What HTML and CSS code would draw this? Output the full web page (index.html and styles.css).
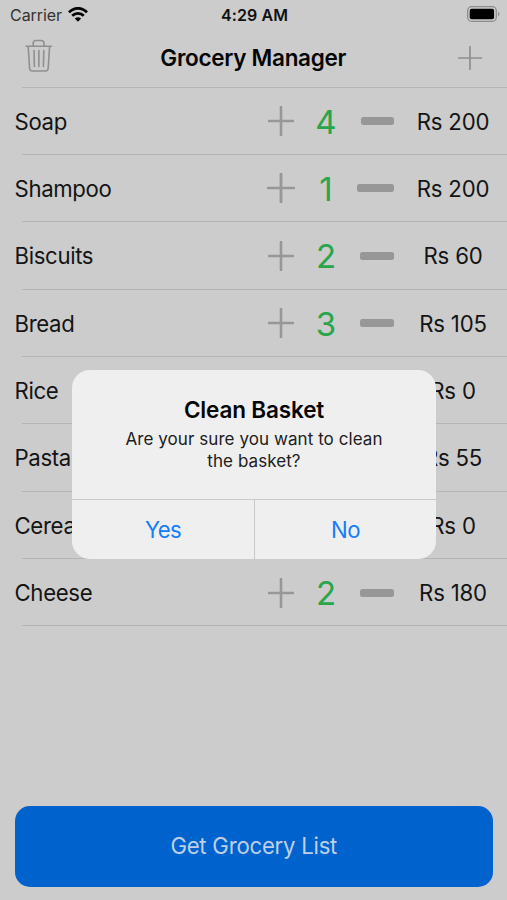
FILE: index.html
```html
<!DOCTYPE html>
<html lang="en">
<head>
<meta charset="utf-8">
<title>Grocery Manager</title>
<link rel="stylesheet" href="styles.css">
</head>
<body>
<svg class="defs" width="0" height="0"><symbol id="plus" viewBox="0 0 26 30" preserveAspectRatio="none"><path d="M13 1v28M1 15h24" stroke="#979797" stroke-width="2.6" stroke-linecap="round"/></symbol></svg>
<div class="screen">
  <div class="status">
    <div class="carrier"><span>Carrier</span>
      <svg width="20" height="15" viewBox="0 0 20 15" fill="none" stroke="#050505" stroke-width="2.7"><path d="M1 5.4C6-.1 14-.1 19 5.4M4.2 8.8C7.5 5.5 12.5 5.5 15.8 8.8"/><path d="M6.8 11.4Q10 8.9 13.2 11.4L10 14.7Z" fill="#050505" stroke="none"/></svg>
    </div>
    <span class="time">4:29 AM</span>
    <svg class="battery" width="33" height="16" viewBox="0 0 33 16"><rect x=".7" y=".7" width="28.6" height="14.6" rx="4" fill="none" stroke="#8b8b8b" stroke-width="1.3"/><rect x="2.7" y="2.8" width="24.4" height="10.4" rx="2" fill="#000"/><path d="M31 5.7q1.5 1 1.5 2.4T31 10.5z" fill="#8b8b8b"/></svg>
  </div>
  <header class="nav">
    <svg class="trash" width="28" height="34" viewBox="0 0 28 34" fill="none" stroke="#8f8f8f" stroke-width="1.6" stroke-linecap="round" stroke-linejoin="round"><path d="M1 7.2h25.6M3.2 7.5l1.4 21.8q.2 2.7 2.8 2.7h13q2.6 0 2.8-2.7L24.6 7.5M8.2 7V4.2q0-2.7 2.7-2.7h5.4q2.7 0 2.7 2.7V7M9 11.5l.4 16M13.9 11.5v16M18.8 11.5l-.4 16"/></svg>
    <h1>Grocery Manager</h1>
    <svg class="add" width="24" height="24" viewBox="0 0 24 24"><path d="M12 .6v22.8M.6 12h22.8" stroke="#8f8f8f" stroke-width="1.7" stroke-linecap="round"/></svg>
  </header>
  <main class="list">
    <div class="row"><span class="name">Soap</span><svg class="plus"><use href="#plus"/></svg><span class="qty">4</span><i class="minus short"></i><span class="price">Rs 200</span></div>
    <div class="row"><span class="name">Shampoo</span><svg class="plus wide"><use href="#plus"/></svg><span class="qty">1</span><i class="minus long"></i><span class="price">Rs 200</span></div>
    <div class="row"><span class="name">Biscuits</span><svg class="plus"><use href="#plus"/></svg><span class="qty">2</span><i class="minus"></i><span class="price">Rs 60</span></div>
    <div class="row"><span class="name">Bread</span><svg class="plus"><use href="#plus"/></svg><span class="qty">3</span><i class="minus"></i><span class="price">Rs 105</span></div>
    <div class="row"><span class="name">Rice</span><svg class="plus"><use href="#plus"/></svg><span class="qty"></span><i class="minus"></i><span class="price">Rs 0</span></div>
    <div class="row"><span class="name">Pasta</span><svg class="plus"><use href="#plus"/></svg><span class="qty"></span><i class="minus"></i><span class="price">Rs 55</span></div>
    <div class="row"><span class="name">Cereal</span><svg class="plus"><use href="#plus"/></svg><span class="qty"></span><i class="minus"></i><span class="price">Rs 0</span></div>
    <div class="row"><span class="name">Cheese</span><svg class="plus"><use href="#plus"/></svg><span class="qty">2</span><i class="minus"></i><span class="price">Rs 180</span></div>
  </main>
  <button class="submit">Get Grocery List</button>
  <div class="alert" role="alertdialog">
    <div class="message">
      <h2>Clean Basket</h2>
      <p>Are your sure you want to clean<br>the basket?</p>
    </div>
    <div class="actions"><button>Yes</button><button>No</button></div>
  </div>
</div>
</body>
</html>
```
FILE: styles.css
```css
* { box-sizing: border-box; }
body { margin: 0; background: #ccc; color: #141414; font-family: Inter, "Liberation Sans", sans-serif; }
.defs { position: absolute; }
h1, h2, p { margin: 0; }
button { border: 0; padding: 0; font-family: inherit; }
svg { display: block; }
.screen { position: relative; height: 900px; display: flex; flex-direction: column; overflow: hidden; }
.status { height: 28px; display: grid; grid-template-columns: 1fr auto 1fr; align-items: center; padding: 1px 8px 0 10px; font-size: 16px; }
.carrier { display: flex; align-items: center; gap: 6px; color: #333; letter-spacing: -.05px; }
.time { font-weight: 600; color: #111; letter-spacing: .1px; }
.battery { justify-self: end; margin: -2px -1px 0 0; }
.nav { height: 59.4px; display: grid; grid-template-columns: 1fr auto 1fr; align-items: center; padding: 0 25px 0 24.5px; }
.trash { margin-top: -3px; }
.nav h1 { font-size: 22.5px; line-height: 30px; font-weight: 600; letter-spacing: -.3px; color: #050505; }
.add { justify-self: end; }
.list { height: 539px; display: grid; grid-template-rows: repeat(8, 1fr); background: linear-gradient(#b5b5b5, #b5b5b5) 22px 0 / 100% 1px no-repeat; }
.row { display: grid; grid-template-columns: 1fr 56px 34px 51px 113px; align-items: center; padding-left: 14.5px; background: linear-gradient(#b5b5b5, #b5b5b5) 22px 100% / 100% 1px no-repeat; font-size: 22.2px; }
.name { letter-spacing: -.35px; }
.plus { width: 26px; height: 30px; justify-self: center; }
.plus.wide { width: 28px; }
.qty { font-size: 33px; line-height: 40px; color: #29a54a; text-align: center; padding-top: 1px; }
.minus { width: 34.5px; height: 8px; border-radius: 2.5px; background: #979797; justify-self: end; }
.minus.short { width: 33.5px; }
.minus.long { width: 37.5px; }
.price { text-align: center; letter-spacing: -.2px; padding-left: 5px; }
.submit { height: 81px; margin: auto 14px 13.5px 14.5px; padding-bottom: 2px; border-radius: 15px; background: #0062cc; color: #bdd0e8; font-size: 22.2px; letter-spacing: -.25px; }
.alert { position: absolute; left: 72px; top: 370px; width: 364px; height: 189px; border-radius: 18px; background: #efefef; overflow: hidden; display: flex; flex-direction: column; text-align: center; }
.message { flex: 1; padding-top: 25px; }
.alert h2 { font-size: 22.5px; line-height: 30px; font-weight: 600; letter-spacing: -.15px; color: #050505; }
.alert p { font-size: 17px; line-height: 21.5px; letter-spacing: .07px; color: #202020; margin-top: 4px; }
.actions { height: 60px; display: grid; grid-template-columns: 1fr 1fr; border-top: 1px solid #c6c8c9; }
.actions button { background: transparent; color: #147efb; font-size: 22.2px; letter-spacing: -.6px; }
.actions button + button { border-left: 1px solid #c6c8c9; }
```
